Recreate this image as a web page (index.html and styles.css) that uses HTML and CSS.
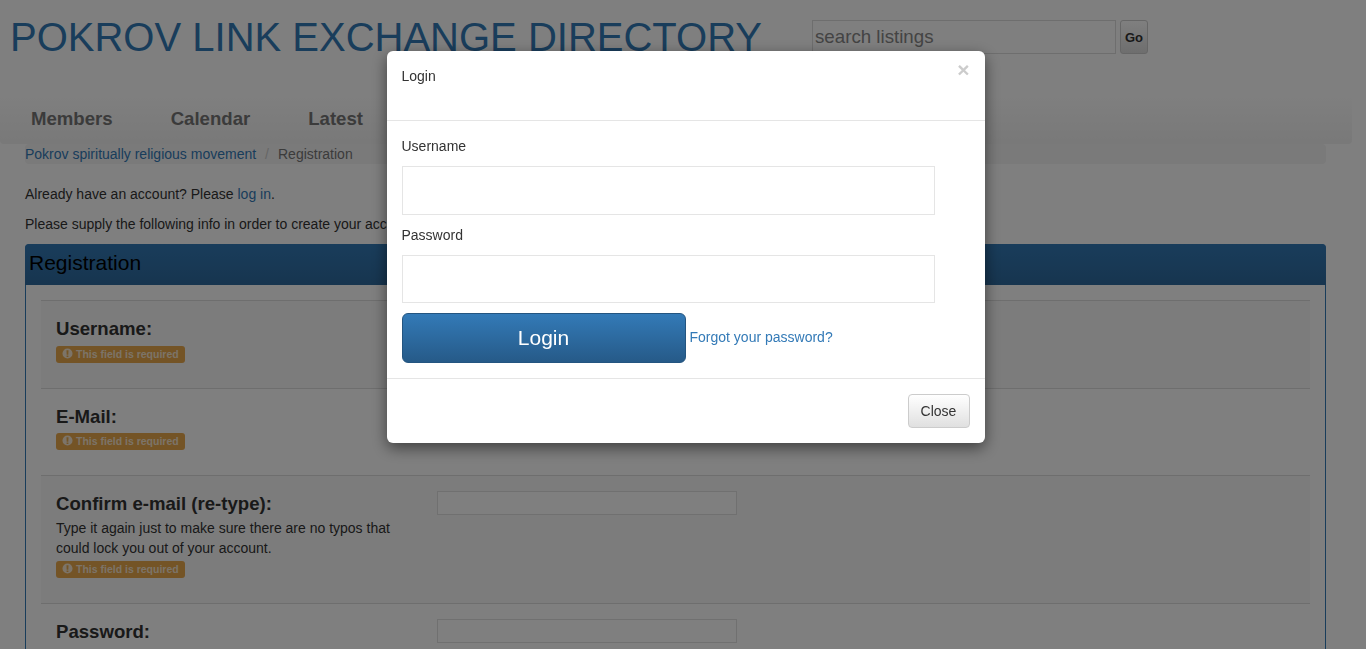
FILE: index.html
```html
<!DOCTYPE html>
<html lang="en">
<head>
    <meta charset="UTF-8">
    <meta name="viewport" content="width=device-width, initial-scale=1.0">
    <title>Pokrov Link Exchange Directory</title>
    <link rel="stylesheet" href="styles.css">
</head>
<body>
    <header class="top">
        <h1 class="site-title">POKROV LINK EXCHANGE DIRECTORY</h1>
        <form class="search">
            <input class="search-input" type="text" placeholder="search listings">
            <button class="search-go" type="button">Go</button>
        </form>
    </header>

    <nav class="main-nav">
        <a href="#">Members</a>
        <a href="#">Calendar</a>
        <a href="#">Latest</a>
    </nav>

    <div class="page">
        <ol class="breadcrumb">
            <li><a href="#">Pokrov spiritually religious movement</a></li>
            <li class="sep">/</li>
            <li class="current">Registration</li>
        </ol>

        <p class="intro">Already have an account? Please <a href="#">log in</a>.</p>
        <p class="intro">Please supply the following info in order to create your account.</p>

        <section class="panel">
            <h2 class="panel-head">Registration</h2>
            <div class="panel-body">
                <div class="field shaded">
                    <div class="field-info">
                        <h3>Username:</h3>
                        <span class="required"><svg viewBox="0 0 12 12"><use href="#warn"/></svg>This field is required</span>
                    </div>
                    <input class="field-input" type="text">
                </div>
                <div class="field">
                    <div class="field-info">
                        <h3>E-Mail:</h3>
                        <span class="required"><svg viewBox="0 0 12 12"><use href="#warn"/></svg>This field is required</span>
                    </div>
                    <input class="field-input" type="text">
                </div>
                <div class="field shaded">
                    <div class="field-info">
                        <h3>Confirm e-mail (re-type):</h3>
                        <p>Type it again just to make sure there are no typos that could lock you out of your account.</p>
                        <span class="required"><svg viewBox="0 0 12 12"><use href="#warn"/></svg>This field is required</span>
                    </div>
                    <input class="field-input" type="text">
                </div>
                <div class="field">
                    <div class="field-info">
                        <h3>Password:</h3>
                        <span class="required"><svg viewBox="0 0 12 12"><use href="#warn"/></svg>This field is required</span>
                    </div>
                    <input class="field-input" type="password">
                </div>
            </div>
        </section>
    </div>

    <svg class="defs" width="0" height="0">
        <symbol id="warn" viewBox="0 0 12 12">
            <path fill="currentColor" fill-rule="evenodd" d="M6 .5a5.5 5.5 0 1 1 0 11 5.5 5.5 0 0 1 0-11zM4.9 2.4l.2 4.9h1.8l.2-4.9zM5 8.1v1.6h2V8.1z"/>
        </symbol>
    </svg>

    <div class="backdrop"></div>

    <div class="modal">
        <div class="modal-head">
            <span class="modal-title">Login</span>
            <span class="modal-x">&times;</span>
        </div>
        <form class="modal-body">
            <label for="loginUser">Username</label>
            <input class="modal-input" id="loginUser" type="text">
            <label for="loginPass">Password</label>
            <input class="modal-input pass" id="loginPass" type="password">
            <div class="login-row">
                <button class="btn-login" type="button">Login</button>
                <a href="#">Forgot your password?</a>
            </div>
        </form>
        <div class="modal-foot">
            <button class="btn-close" type="button">Close</button>
        </div>
    </div>
</body>
</html>
```

FILE: styles.css
```css
* {
    box-sizing: border-box;
}

html, body {
    height: 100%;
    overflow: hidden;
}

body {
    margin: 0;
    font-family: "Liberation Sans", Arial, sans-serif;
    font-size: 14px;
    line-height: 20px;
    color: #333;
    background: #fff;
}

a {
    color: #337ab7;
    text-decoration: none;
}

.top {
    display: flex;
    height: 94px;
}

.site-title {
    margin: 15px 0 0 10px;
    width: 802px;
    font-size: 40px;
    line-height: 44px;
    font-weight: normal;
    color: #337ab7;
}

.search {
    display: flex;
    gap: 4px;
    margin-top: 20px;
    height: 34px;
}

.search-input {
    width: 304px;
    padding: 0 2px;
    font-family: inherit;
    font-size: 18.72px;
    border: 1px solid #ddd;
    background: #fff;
}

.search-input::placeholder {
    color: #888;
}

.search-go {
    width: 28px;
    padding: 0;
    font-family: inherit;
    font-size: 13px;
    font-weight: bold;
    color: #333;
    border: 1px solid #ccc;
    border-radius: 3px;
    background: linear-gradient(#fff, #ddd);
}

.main-nav {
    display: flex;
    gap: 58px;
    height: 50px;
    margin-right: 14px;
    padding-left: 31px;
    font-size: 18.6px;
    font-weight: bold;
    line-height: 50px;
    border-radius: 4px;
    background: linear-gradient(#fff, #f2f2f2);
}

.main-nav a {
    color: #777;
}

.page {
    padding: 0 40px 0 25px;
}

.breadcrumb {
    display: flex;
    gap: 9px;
    margin: 0 0 20px;
    padding: 0;
    height: 20px;
    list-style: none;
    border-radius: 4px;
    background: #f5f5f5;
}

.sep {
    color: #ccc;
}

.current {
    color: #777;
}

.intro {
    margin: 0 0 10px;
}

.panel {
    margin-top: 10px;
    border: 1px solid #337ab7;
    border-radius: 4px;
}

.panel-head {
    margin: -1px -1px 0;
    height: 41px;
    padding: 0 4px;
    font-size: 21px;
    font-weight: normal;
    line-height: 38px;
    color: #000;
    border-radius: 4px 4px 0 0;
    background: linear-gradient(#337ab7, #2e6a9e);
}

.panel-body {
    padding: 15px;
}

.field {
    display: flex;
    align-items: flex-start;
    padding: 15px 15px 25px;
    border-top: 1px solid #ddd;
}

.field.shaded {
    background: #f9f9f9;
}

.field-info {
    width: 381px;
    padding-right: 40px;
}

.field-info h3 {
    margin: 0 0 4px;
    font-size: 18.6px;
    line-height: 25.6px;
}

.field-info p {
    margin: -3px 0 3.4px;
}

.required {
    display: block;
    width: 129px;
    height: 17px;
    padding-left: 6px;
    font-size: 10.5px;
    font-weight: bold;
    line-height: 17px;
    color: rgba(255, 255, 255, 0.75);
    border-radius: 3px;
    background: #e8a84c;
}

.required svg {
    width: 11px;
    height: 11px;
    margin-right: 3px;
    vertical-align: -1px;
}

.field-input {
    width: 300px;
    height: 24px;
    border: 1px solid #e0e0e0;
    background: #fff;
}

.defs {
    position: absolute;
}

.backdrop {
    position: fixed;
    inset: 0;
    background: rgba(0, 0, 0, 0.5);
}

.modal {
    position: fixed;
    top: 51px;
    left: 386.5px;
    width: 598px;
    height: 392px;
    border-radius: 6px;
    background: #fff;
    box-shadow: 0 5px 15px rgba(0, 0, 0, 0.5);
}

.modal-head {
    position: relative;
    height: 70px;
    padding: 15px;
    border-bottom: 1px solid #e5e5e5;
}

.modal-x {
    position: absolute;
    top: 9px;
    right: 15px;
    font-size: 21px;
    font-weight: bold;
    color: #ccc;
}

.modal-body {
    padding: 15px;
    height: 258px;
    border-bottom: 1px solid #e5e5e5;
}

.modal-body label {
    display: block;
    height: 20px;
    margin-bottom: 10px;
}

.modal-input {
    display: block;
    width: 533px;
    height: 49px;
    margin: 0 0 10px;
    border: 1px solid #e5e5e5;
    background: #fff;
}

.modal-input.pass {
    height: 48px;
}

.login-row {
    display: flex;
    align-items: center;
    gap: 4px;
}

.btn-login {
    width: 284px;
    height: 50px;
    padding: 0;
    font-family: inherit;
    font-size: 21px;
    color: #fff;
    border: 1px solid #245580;
    border-radius: 6px;
    background: linear-gradient(#337ab7, #265a88);
}

.login-row a {
    margin-top: -2px;
}

.modal-foot {
    display: flex;
    justify-content: flex-end;
    padding: 15px;
}

.btn-close {
    width: 62px;
    height: 34px;
    padding: 0;
    font-family: inherit;
    font-size: 14px;
    color: #333;
    border: 1px solid #ccc;
    border-radius: 4px;
    background: linear-gradient(#fff, #e0e0e0);
}
```
